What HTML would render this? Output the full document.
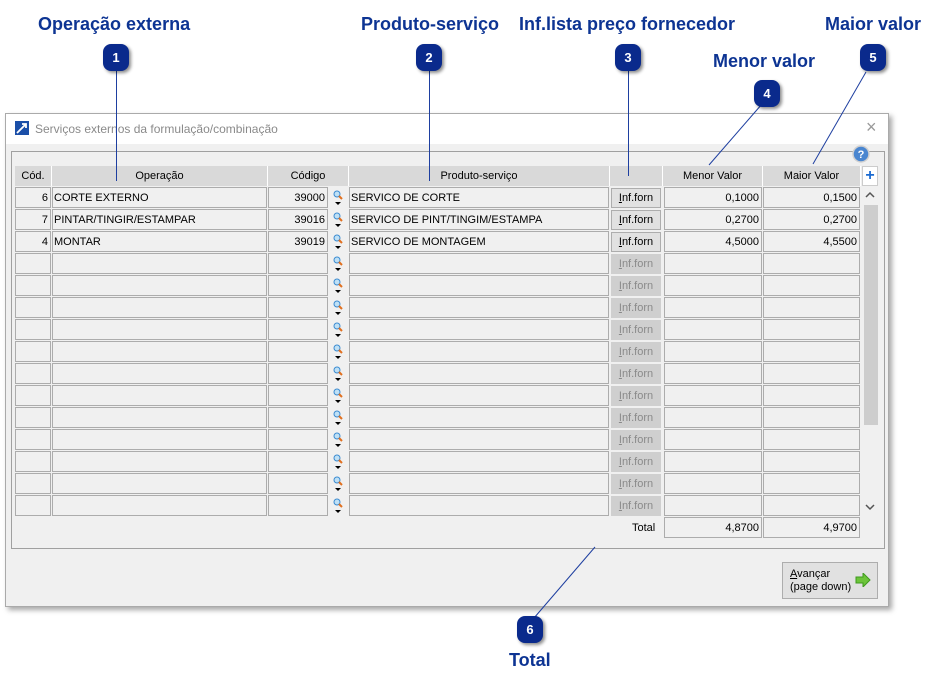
<!DOCTYPE html><html><head><meta charset="utf-8"><style>
*{box-sizing:border-box;margin:0;padding:0}
body{width:940px;height:689px;background:#fff;position:relative;overflow:hidden;font-family:"Liberation Sans",sans-serif;font-size:11px;color:#000}
.a{position:absolute}
.lbl{position:absolute;font-weight:bold;font-size:18px;color:#0d3493;white-space:nowrap}
.bd{position:absolute;width:26px;height:27px;border-radius:8px;background:#0a2a8c;color:#fff;font-weight:bold;font-size:13px;text-align:center;line-height:27px;box-shadow:2px 2px 3px rgba(0,0,0,.45)}
.win{left:5px;top:113px;width:884px;height:494px;background:#f0f0f0;border:1px solid #aaa;box-shadow:3px 3px 5px rgba(0,0,0,.35)}
.r{position:absolute;left:0;height:21px;width:940px}
.c{position:absolute;top:0;height:21px;border:1px solid #acacac;background:#f0f0f0;line-height:20px;padding:0 1px;white-space:nowrap;overflow:hidden}
.rt{text-align:right;padding-right:2px}
.h{position:absolute;top:166px;height:20px;background:#d9d9d9;border-right:1px solid #fff;text-align:center;line-height:21px}
.b{position:absolute;top:1px;left:611px;width:50px;height:20px;background:#e1e1e1;border:1px solid #adadad;text-align:center;line-height:19px}
.dis{background:#cfcfcf;color:#8a8a8a;border-color:#cfcfcf}
</style></head><body>
<div class="lbl" style="left:38px;top:14px">Operação externa</div>
<div class="lbl" style="left:361px;top:14px">Produto-serviço</div>
<div class="lbl" style="left:519px;top:14px">Inf.lista preço fornecedor</div>
<div class="lbl" style="left:713px;top:51px">Menor valor</div>
<div class="lbl" style="left:825px;top:14px">Maior valor</div>
<div class="lbl" style="left:509px;top:650px">Total</div>

<div class="a win">
<div class="a" style="left:0;top:0;width:882px;height:30px;background:#fff"></div>
<svg class="a" style="left:9px;top:7px" width="14" height="14"><rect width="14" height="14" fill="#1b4fa8"/><path d="M2 12L11 3M7 3h4v4" stroke="#fff" stroke-width="1.8" fill="none"/></svg>
<div class="a" style="left:29px;top:8px;font-size:12px;color:#8a8a8a">Serviços externos da formulação/combinação</div>
<div class="a" style="left:860px;top:3px;font-size:18px;color:#999">×</div>
<div class="a" style="left:5px;top:37px;width:874px;height:398px;border:1px solid #a0a0a0"></div>
<div class="a" style="left:776px;top:448px;width:96px;height:37px;background:#e1e1e1;border:1px solid #adadad;padding:5px 7px;line-height:13px;font-size:11px"><u>A</u>vançar<br>(page down)
<svg class="a" style="left:72px;top:10px" width="16" height="14"><path d="M1 4h7V0l7 7-7 7v-4H1z" fill="#6cc43a" stroke="#3e9a1e"/></svg></div>
</div>
<svg class="a" style="left:852px;top:145px" width="18" height="18"><circle cx="9" cy="9" r="8" fill="#4a86d0" stroke="#d0d0d0" stroke-width="1.5"/><text x="9" y="13" font-size="11" font-weight="bold" fill="#fff" text-anchor="middle" font-family="Liberation Sans">?</text></svg>

<div class="h" style="left:15px;width:37px">Cód.</div>
<div class="h" style="left:52px;width:216px">Operação</div>
<div class="h" style="left:268px;width:81px">Código</div>
<div class="h" style="left:349px;width:261px">Produto-serviço</div>
<div class="h" style="left:610px;width:53px"></div>
<div class="h" style="left:663px;width:100px">Menor Valor</div>
<div class="h" style="left:763px;width:98px">Maior Valor</div>
<div class="a" style="left:862px;top:166px;width:16px;height:20px;background:#fff;border:1px solid #ccc;color:#1a6ad0;font-weight:bold;font-size:16px;text-align:center;line-height:17px">+</div>
<div class="a" style="left:862px;top:187px;width:16px;height:328px;background:#f0f0f0"></div>
<div class="a" style="left:864px;top:205px;width:14px;height:220px;background:#cdcdcd"></div>
<svg class="a" style="left:864px;top:191px" width="12" height="8"><path d="M2 6l4-4 4 4" stroke="#555" stroke-width="1.5" fill="none"/></svg>
<svg class="a" style="left:864px;top:503px" width="12" height="8"><path d="M2 2l4 4 4-4" stroke="#555" stroke-width="1.5" fill="none"/></svg>

<div class="r" style="top:187px"><div class="c rt" style="left:15px;width:36px">6</div><div class="c" style="left:52px;width:215px">CORTE EXTERNO</div><div class="c rt" style="left:268px;width:60px">39000</div><div class="c" style="left:349px;width:260px">SERVICO DE CORTE</div><div class="b"><u>I</u>nf.forn</div><div class="c rt" style="left:664px;width:98px">0,1000</div><div class="c rt" style="left:763px;width:97px">0,1500</div></div>
<div class="r" style="top:209px"><div class="c rt" style="left:15px;width:36px">7</div><div class="c" style="left:52px;width:215px">PINTAR/TINGIR/ESTAMPAR</div><div class="c rt" style="left:268px;width:60px">39016</div><div class="c" style="left:349px;width:260px">SERVICO DE PINT/TINGIM/ESTAMPA</div><div class="b"><u>I</u>nf.forn</div><div class="c rt" style="left:664px;width:98px">0,2700</div><div class="c rt" style="left:763px;width:97px">0,2700</div></div>
<div class="r" style="top:231px"><div class="c rt" style="left:15px;width:36px">4</div><div class="c" style="left:52px;width:215px">MONTAR</div><div class="c rt" style="left:268px;width:60px">39019</div><div class="c" style="left:349px;width:260px">SERVICO DE MONTAGEM</div><div class="b"><u>I</u>nf.forn</div><div class="c rt" style="left:664px;width:98px">4,5000</div><div class="c rt" style="left:763px;width:97px">4,5500</div></div>
<div class="r" style="top:253px"><div class="c" style="left:15px;width:36px"></div><div class="c" style="left:52px;width:215px"></div><div class="c" style="left:268px;width:60px"></div><div class="c" style="left:349px;width:260px"></div><div class="b dis"><u>I</u>nf.forn</div><div class="c" style="left:664px;width:98px"></div><div class="c" style="left:763px;width:97px"></div></div>
<div class="r" style="top:275px"><div class="c" style="left:15px;width:36px"></div><div class="c" style="left:52px;width:215px"></div><div class="c" style="left:268px;width:60px"></div><div class="c" style="left:349px;width:260px"></div><div class="b dis"><u>I</u>nf.forn</div><div class="c" style="left:664px;width:98px"></div><div class="c" style="left:763px;width:97px"></div></div>
<div class="r" style="top:297px"><div class="c" style="left:15px;width:36px"></div><div class="c" style="left:52px;width:215px"></div><div class="c" style="left:268px;width:60px"></div><div class="c" style="left:349px;width:260px"></div><div class="b dis"><u>I</u>nf.forn</div><div class="c" style="left:664px;width:98px"></div><div class="c" style="left:763px;width:97px"></div></div>
<div class="r" style="top:319px"><div class="c" style="left:15px;width:36px"></div><div class="c" style="left:52px;width:215px"></div><div class="c" style="left:268px;width:60px"></div><div class="c" style="left:349px;width:260px"></div><div class="b dis"><u>I</u>nf.forn</div><div class="c" style="left:664px;width:98px"></div><div class="c" style="left:763px;width:97px"></div></div>
<div class="r" style="top:341px"><div class="c" style="left:15px;width:36px"></div><div class="c" style="left:52px;width:215px"></div><div class="c" style="left:268px;width:60px"></div><div class="c" style="left:349px;width:260px"></div><div class="b dis"><u>I</u>nf.forn</div><div class="c" style="left:664px;width:98px"></div><div class="c" style="left:763px;width:97px"></div></div>
<div class="r" style="top:363px"><div class="c" style="left:15px;width:36px"></div><div class="c" style="left:52px;width:215px"></div><div class="c" style="left:268px;width:60px"></div><div class="c" style="left:349px;width:260px"></div><div class="b dis"><u>I</u>nf.forn</div><div class="c" style="left:664px;width:98px"></div><div class="c" style="left:763px;width:97px"></div></div>
<div class="r" style="top:385px"><div class="c" style="left:15px;width:36px"></div><div class="c" style="left:52px;width:215px"></div><div class="c" style="left:268px;width:60px"></div><div class="c" style="left:349px;width:260px"></div><div class="b dis"><u>I</u>nf.forn</div><div class="c" style="left:664px;width:98px"></div><div class="c" style="left:763px;width:97px"></div></div>
<div class="r" style="top:407px"><div class="c" style="left:15px;width:36px"></div><div class="c" style="left:52px;width:215px"></div><div class="c" style="left:268px;width:60px"></div><div class="c" style="left:349px;width:260px"></div><div class="b dis"><u>I</u>nf.forn</div><div class="c" style="left:664px;width:98px"></div><div class="c" style="left:763px;width:97px"></div></div>
<div class="r" style="top:429px"><div class="c" style="left:15px;width:36px"></div><div class="c" style="left:52px;width:215px"></div><div class="c" style="left:268px;width:60px"></div><div class="c" style="left:349px;width:260px"></div><div class="b dis"><u>I</u>nf.forn</div><div class="c" style="left:664px;width:98px"></div><div class="c" style="left:763px;width:97px"></div></div>
<div class="r" style="top:451px"><div class="c" style="left:15px;width:36px"></div><div class="c" style="left:52px;width:215px"></div><div class="c" style="left:268px;width:60px"></div><div class="c" style="left:349px;width:260px"></div><div class="b dis"><u>I</u>nf.forn</div><div class="c" style="left:664px;width:98px"></div><div class="c" style="left:763px;width:97px"></div></div>
<div class="r" style="top:473px"><div class="c" style="left:15px;width:36px"></div><div class="c" style="left:52px;width:215px"></div><div class="c" style="left:268px;width:60px"></div><div class="c" style="left:349px;width:260px"></div><div class="b dis"><u>I</u>nf.forn</div><div class="c" style="left:664px;width:98px"></div><div class="c" style="left:763px;width:97px"></div></div>
<div class="r" style="top:495px"><div class="c" style="left:15px;width:36px"></div><div class="c" style="left:52px;width:215px"></div><div class="c" style="left:268px;width:60px"></div><div class="c" style="left:349px;width:260px"></div><div class="b dis"><u>I</u>nf.forn</div><div class="c" style="left:664px;width:98px"></div><div class="c" style="left:763px;width:97px"></div></div>
<div class="a" style="left:632px;top:522px">Total</div>
<div class="r" style="top:517px"><div class="c rt" style="left:664px;width:98px">4,8700</div><div class="c rt" style="left:763px;width:97px">4,9700</div></div>

<svg class="a" style="left:0;top:0" width="940" height="689">
<g id="mg">
<g transform="translate(333,190)"><circle cx="4" cy="4" r="3" fill="#bfe0f5" stroke="#3a8ad0"/><path d="M6 6l3 3" stroke="#e07020" stroke-width="2"/><path d="M2 12h6l-3 3z" fill="#000"/></g>
</g>
<use href="#mg" y="22"/><use href="#mg" y="44"/><use href="#mg" y="66"/><use href="#mg" y="88"/><use href="#mg" y="110"/><use href="#mg" y="132"/><use href="#mg" y="154"/><use href="#mg" y="176"/><use href="#mg" y="198"/><use href="#mg" y="220"/><use href="#mg" y="242"/><use href="#mg" y="264"/><use href="#mg" y="286"/><use href="#mg" y="308"/>
<g stroke="#1e3fa0" stroke-width="1" fill="none">
<path d="M116.5 70V181"/><path d="M429.5 70V181"/><path d="M628.5 70V176"/>
<path d="M762 104L709 165"/><path d="M866 72L813 164"/><path d="M534 618L595 547"/>
</g>
</svg>
<div class="bd" style="left:103px;top:44px">1</div>
<div class="bd" style="left:416px;top:44px">2</div>
<div class="bd" style="left:615px;top:44px">3</div>
<div class="bd" style="left:754px;top:80px">4</div>
<div class="bd" style="left:860px;top:44px">5</div>
<div class="bd" style="left:517px;top:616px">6</div>
</body></html>
